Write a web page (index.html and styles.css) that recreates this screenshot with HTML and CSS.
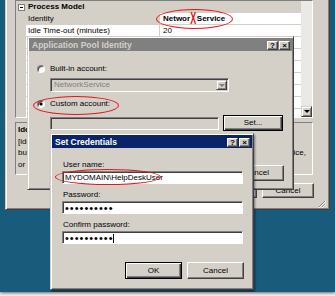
FILE: index.html
```html
<!DOCTYPE html>
<html>
<head>
<meta charset="utf-8">
<title>Set Credentials</title>
<link rel="stylesheet" href="styles.css">
</head>
<body>
<div class="desk">
<div class="win main">
  <div class="pg">
    <div class="pg-rows">
      <div class="pg-cat"><span class="gut"><span class="minus"></span></span><b class="catname">Process Model</b></div>
      <div class="pg-row sel"><span class="gut"></span><span class="nm">Identity</span><span class="val"><b>Networ<span class="redx">X</span>Service</b></span></div>
      <div class="pg-row"><span class="gut"></span><span class="nm">Idle Time-out (minutes)</span><span class="val">20</span></div>
      <div class="pg-row"><span class="gut"></span><span class="nm">Load User Profile</span><span class="val">False</span></div>
      <div class="pg-row"><span class="gut"></span><span class="nm">Maximum Worker Processes</span><span class="val">1</span></div>
      <div class="pg-row"><span class="gut"></span><span class="nm">Ping Enabled</span><span class="val">True</span></div>
      <div class="pg-row"><span class="gut"></span><span class="nm">Ping Maximum Response Time (seconds)</span><span class="val">90</span></div>
      <div class="pg-row"><span class="gut"></span><span class="nm">Ping Period (seconds)</span><span class="val">30</span></div>
      <div class="pg-row"><span class="gut"></span><span class="nm">Shutdown Time Limit (seconds)</span><span class="val">90</span></div>
      <div class="pg-row"><span class="gut"></span><span class="nm">Startup Time Limit (seconds)</span><span class="val">90</span></div>
    </div>
    <div class="sb"><span class="sb-track"></span><span class="sb-btn"><i class="tri"></i></span></div>
  </div>
  <div class="desc">
    <b class="ln">Identity</b>
    <span class="ln">[identityType, username, password] Configures the application pool to run</span>
    <span class="ln wide">built-in account, i.e. Network Service (recommended), Local Service,</span>
    <span class="ln">or as a specific user identity.</span>
  </div>
  <div class="main-btns"><span class="btn">OK</span><span class="btn">Cancel</span></div>
  <div class="grip-row">
    <svg class="grip" width="8" height="8" viewBox="0 0 8 8"><path d="M7 1L1 7M7 4L4 7" stroke="#808080" stroke-width="1"/><path d="M8 1L1 8M8 4L4 8" stroke="#fff" stroke-width="1"/></svg>
  </div>
</div>

<div class="win apid">
  <div class="title inactive"><span>Application Pool Identity</span><span class="tbtns"><span class="tb">?</span><span class="tb">×</span></span></div>
  <div class="apid-body">
    <div class="radio-row"><span class="radio"></span><span>Built-in account:</span></div>
    <div class="combo"><span class="combo-text">NetworkService</span><span class="combo-btn"><i class="tri dis"></i></span></div>
    <div class="radio-row second"><span class="radio on"></span><span>Custom account:</span></div>
    <div class="custom-row"><span class="field dis"></span><span class="btn def setbtn">Set...</span></div>
    <div class="dlg-btns apid-btns"><span class="btn">OK</span><span class="btn">Cancel</span></div>
  </div>
</div>

<div class="win cred">
  <div class="title active"><span>Set Credentials</span><span class="tbtns"><span class="tb">?</span><span class="tb">×</span></span></div>
  <div class="cred-body">
    <div class="lbl">User name:</div>
    <div class="field">MYDOMAIN\HelpDeskUser</div>
    <div class="lbl">Password:</div>
    <div class="field pw">••••••••••</div>
    <div class="lbl">Confirm password:</div>
    <div class="field pw">••••••••••<span class="caret"></span></div>
    <div class="dlg-btns cred-btns"><span class="btn def">OK</span><span class="btn">Cancel</span></div>
  </div>
</div>

<span class="ring ring-id"></span>
<span class="ring ring-custom"></span>
<span class="ring ring-user"></span>
</div>
</body>
</html>
```
FILE: styles.css
```css
*{box-sizing:border-box;margin:0;padding:0}
html,body{width:335px;height:296px;overflow:hidden}
body{background:#f2f2f2;font-family:"Liberation Sans",Arial,sans-serif;font-size:8px;line-height:10px;color:#000}
.desk{position:relative;width:335px;height:292px;background:#185b7b;overflow:hidden;box-shadow:0 1px 3px rgba(0,0,0,.6)}

.win{position:absolute;background:#d4d0c8;border:1px solid;border-color:#d4d0c8 #404040 #404040 #d4d0c8;box-shadow:inset 1px 1px #fff,inset -1px -1px #808080}

/* main IIS window */
.main{left:5px;top:-20px;width:325px;padding:19px 0 1px 9px;display:flex;flex-direction:column}
.pg{width:298px;height:118px;display:flex;border:1px solid;border-color:#808080 #fff #fff #808080;background:#fff}
.pg-rows{flex:1;overflow:hidden;display:flex;flex-direction:column}
.pg-cat{height:12px;flex:none;display:flex;align-items:center;background:#d4d0c8}
.gut{width:10px;flex:none;align-self:stretch;background:#d4d0c8;display:flex;align-items:center;justify-content:center}
.minus{width:7px;height:7px;border:1px solid #808080;background:linear-gradient(#000,#000) center/3px 1px no-repeat,#fff}
.catname{padding-left:2px}
.pg-row{height:12px;flex:none;display:flex}
.nm{width:134px;flex:none;padding-left:2px;line-height:11px;background:#fff;border-bottom:1px solid #d4d0c8;border-right:1px solid #d4d0c8;white-space:nowrap;overflow:hidden}
.val{flex:1;padding-left:3px;line-height:11px;background:#fff;border-bottom:1px solid #d4d0c8;white-space:nowrap}
.sel .nm{background:#d4d0c8}
.redx{display:inline-block;color:#e3141b;font-size:10px;transform:scale(.9,1.6);line-height:0;vertical-align:-1px}
.sb{width:11px;flex:none;display:flex;flex-direction:column;background:#ebe9e5}
.sb-track{flex:1}
.sb-btn{height:11px;flex:none;background:#d4d0c8;border:1px solid;border-color:#d4d0c8 #404040 #404040 #d4d0c8;box-shadow:inset 1px 1px #fff,inset -1px -1px #808080;display:flex;align-items:center;justify-content:center}
.tri{width:0;height:0;border-left:3px solid transparent;border-right:3px solid transparent;border-top:3px solid #000}
.tri.dis{border-top-color:#808080}

.desc{margin-top:4px;width:298px;height:53px;border:1px solid;border-color:#808080 #fff #fff #808080;padding:1px 2px;line-height:11.5px;overflow:hidden;display:flex;flex-direction:column}
.ln{display:block;white-space:nowrap}
.wide{width:288px;text-align:justify;text-align-last:justify}

.main-btns{display:flex;justify-content:flex-end;gap:5px;margin-top:8px;padding-right:15px}
.btn{width:52px;height:15px;flex:none;display:flex;align-items:center;justify-content:center;background:#d4d0c8;border:1px solid;border-color:#fff #404040 #404040 #fff;box-shadow:inset -1px -1px #808080}
.btn.def{border-color:#000;box-shadow:inset 1px 1px #fff,inset -1px -1px #404040,inset -2px -2px #808080}
.grip-row{display:flex;justify-content:flex-end;margin-top:2px;padding-right:3px}
.grip{display:block}

/* title bars */
.title{margin:1px;height:13px;display:flex;align-items:center;justify-content:space-between;padding:0 2px 0 3px;font-weight:bold;font-size:8.5px}
.inactive{background:#808080;color:#d4d0c8}
.active{background:#0a246a;color:#fff}
.tbtns{display:flex;gap:1px;margin-top:2px}
.tb{width:11px;height:9px;background:#d4d0c8;color:#000;border:1px solid;border-color:#fff #404040 #404040 #fff;box-shadow:inset -1px -1px #808080;font-size:8px;line-height:7px;display:flex;justify-content:center;align-items:center}

/* Application Pool Identity */
.apid{left:27px;top:36px;width:267px;height:154px}
.apid-body{padding:11px 9px 0 9px;display:flex;flex-direction:column}
.radio-row{height:12px;display:flex;align-items:center;gap:5px}
.radio-row.second{margin-top:6px}
.radio{width:8px;height:8px;border-radius:50%;background:#fff;border:1px solid;border-color:#808080 #fff #fff #808080;box-shadow:inset 1px 1px #404040}
.radio.on{background:radial-gradient(circle,#000 1.3px,#fff 1.8px)}
.combo{margin:3px 0 0 13px;width:179px;height:14px;display:flex;align-items:center;justify-content:space-between;background:#d4d0c8;border:1px solid;border-color:#808080 #fff #fff #808080;box-shadow:inset 1px 1px #404040;padding:1px 1px 1px 3px;color:#808080}
.combo-btn{width:11px;height:10px;background:#d4d0c8;border:1px solid;border-color:#d4d0c8 #404040 #404040 #d4d0c8;box-shadow:inset 1px 1px #fff,inset -1px -1px #808080;display:flex;align-items:center;justify-content:center}
.custom-row{margin:5px 0 0 13px;display:flex;align-items:center;gap:4px}
.field{height:13px;background:#fff;border:1px solid;border-color:#808080 #fff #fff #808080;box-shadow:inset 1px 1px #404040;padding:1px 0 0 2px;line-height:10px;white-space:nowrap;display:flex;align-items:center}
.field.dis{width:169px;background:#d4d0c8}
.setbtn{width:60px;height:16px}
.dlg-btns{display:flex;justify-content:flex-end;gap:5px}
.apid-btns{margin-top:34px}
.apid-btns .btn{width:55px;height:16px}

/* Set Credentials */
.cred{left:50px;top:133px;width:204px;height:157px;box-shadow:inset 1px 1px #fff,inset -1px -1px #808080,1px 2px 2px rgba(0,0,0,.45)}
.cred-body{padding:11px 10px 0 11px;display:flex;flex-direction:column}
.lbl{height:10px;margin-bottom:1px;padding-left:1px}
.cred-body .field{margin-bottom:6px}
.pw{font-size:11px;letter-spacing:1px}
.caret{width:1px;height:9px;background:#000;margin-left:-1px}
.cred-btns{margin-top:12px;margin-right:-1px}
.cred-btns .btn{width:57px;height:17px}

/* annotations */
.ring{position:absolute;border:1.5px solid #e3141b;border-radius:50%}
.ring-id{left:156px;top:9px;width:77px;height:20px}
.ring-custom{left:33px;top:96px;width:86px;height:19px}
.ring-user{left:55px;top:169px;width:106px;height:16px}
```
